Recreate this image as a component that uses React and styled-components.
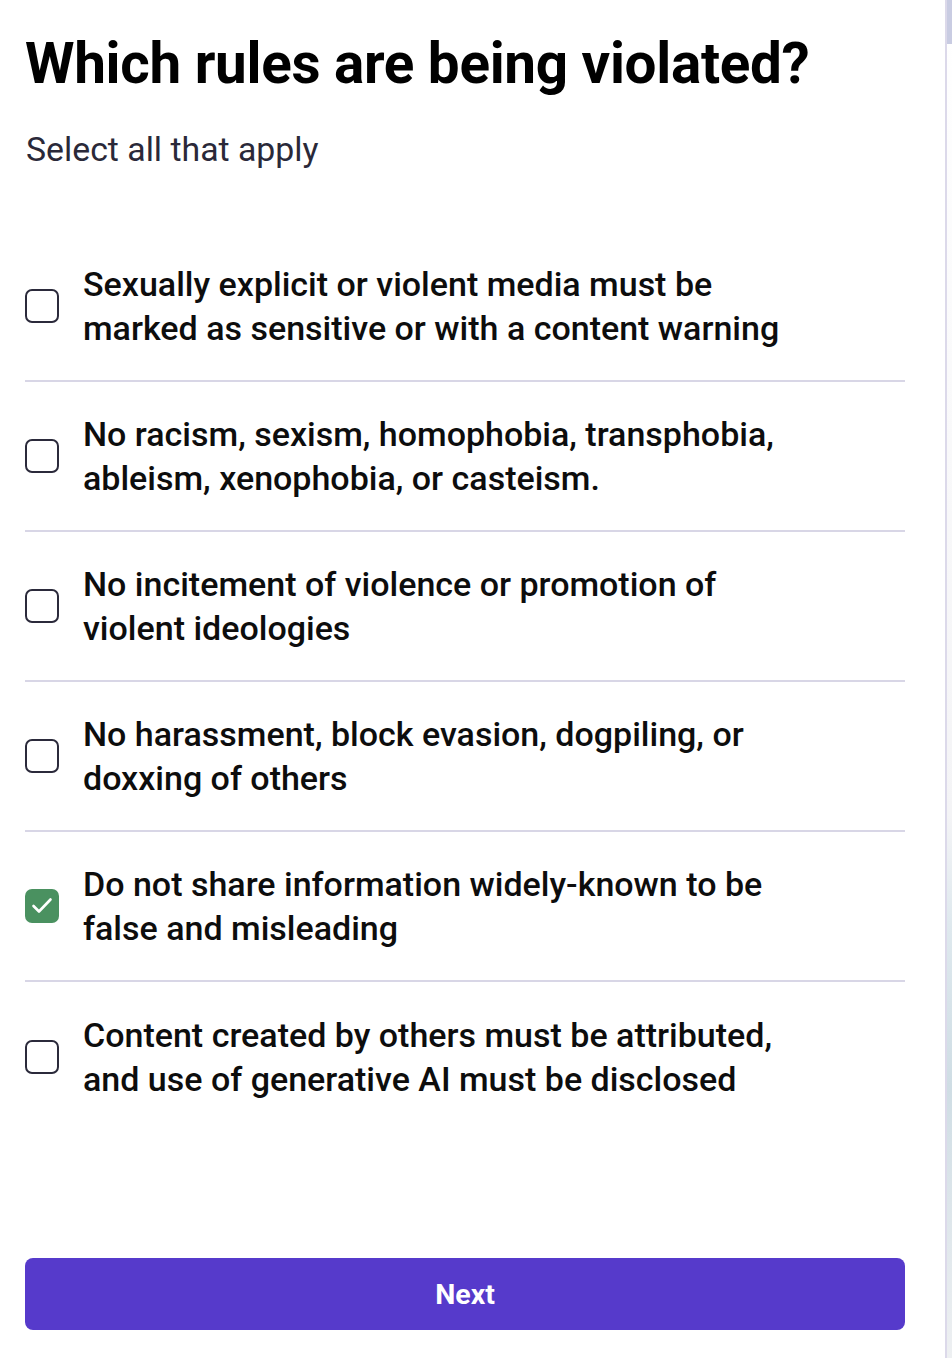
import React, { useState } from 'react'
import styled, { createGlobalStyle } from 'styled-components'

const GlobalStyle = createGlobalStyle`
  html, body {
    margin: 0;
    padding: 0;
    background: #ffffff;
  }
  body {
    font-family: Roboto, "Liberation Sans", Arial, sans-serif;
    -webkit-font-smoothing: antialiased;
  }
`

const rules = [
  'Sexually explicit or violent media must be marked as sensitive or with a content warning',
  'No racism, sexism, homophobia, transphobia, ableism, xenophobia, or casteism.',
  'No incitement of violence or promotion of violent ideologies',
  'No harassment, block evasion, dogpiling, or doxxing of others',
  'Do not share information widely-known to be false and misleading',
  'Content created by others must be attributed, and use of generative AI must be disclosed',
]

const CheckIcon = () => (
  <svg width="34" height="34" viewBox="0 0 34 34" fill="none">
    <path d="M8.5 17l5.5 5.5 11.5-12" stroke="#ffffff" strokeWidth="2.6" strokeLinecap="round" strokeLinejoin="round" />
  </svg>
)

export default function App() {
  const [checked, setChecked] = useState([4])

  const toggle = (i) => {
    setChecked(prev => prev.includes(i) ? prev.filter(x => x !== i) : [...prev, i])
  }

  return (
    <>
      <GlobalStyle />
      <Page>
        <Panel>
          <Title>Which rules are being violated?</Title>
          <Subtitle>Select all that apply</Subtitle>
          <RuleList>
            {rules.map((rule, i) => (
              <RuleRow key={i} onClick={() => toggle(i)}>
                <Box $checked={checked.includes(i)}>
                  {checked.includes(i) && <CheckIcon />}
                </Box>
                <RuleText>{rule}</RuleText>
              </RuleRow>
            ))}
          </RuleList>
          <NextButton type="button">Next</NextButton>
        </Panel>
        <Backdrop>
          <BackdropTop />
        </Backdrop>
      </Page>
    </>
  )
}

const Page = styled.div`
  display: flex;
  height: 1358px;
  overflow: hidden;
`

const Panel = styled.div`
  width: 880px;
  flex-shrink: 0;
  padding: 28px 40px 0 25px;
  border-right: 2px solid #dcd9ea;
  display: flex;
  flex-direction: column;
  background: #ffffff;
`

const Title = styled.h1`
  margin: 0;
  font-size: 56.6px;
  line-height: 72px;
  font-weight: 700;
  color: #000000;
  letter-spacing: -0.3px;
`

const Subtitle = styled.p`
  margin: 28px 0 0 1px;
  font-size: 33.8px;
  line-height: 44px;
  font-weight: 400;
  color: #2a2939;
`

const RuleList = styled.div`
  margin-top: 60px;
  display: flex;
  flex-direction: column;
`

const RuleRow = styled.label`
  display: flex;
  align-items: center;
  gap: 24px;
  height: 150px;
  box-sizing: border-box;
  border-bottom: 2px solid #d8d6e6;
  cursor: pointer;

  &:last-child {
    border-bottom: none;
  }
`

const Box = styled.span`
  width: 34px;
  height: 34px;
  flex-shrink: 0;
  box-sizing: border-box;
  border-radius: 7px;
  border: ${p => p.$checked ? 'none' : '2.5px solid #2b2a3b'};
  background: ${p => p.$checked ? '#4a9160' : '#ffffff'};
  display: flex;
  align-items: center;
  justify-content: center;
`

const RuleText = styled.span`
  font-size: 34px;
  line-height: 44px;
  font-weight: 500;
  color: #0d0d0d;
  max-width: 720px;
`

const NextButton = styled.button`
  margin-top: 126px;
  height: 72px;
  width: 100%;
  border: none;
  border-radius: 8px;
  background: #563acb;
  color: #ffffff;
  font-family: Roboto, "Liberation Sans", Arial, sans-serif;
  font-size: 28.5px;
  font-weight: 700;
  cursor: pointer;
`

const Backdrop = styled.div`
  flex: 1;
  background: linear-gradient(180deg, #ffffff 0%, #f4f4f6 60%, #dfe9ee 68%, #cfdde4 80%, #eef0f2 100%);
`

const BackdropTop = styled.div`
  height: 44px;
  background: #c9cce2;
`
